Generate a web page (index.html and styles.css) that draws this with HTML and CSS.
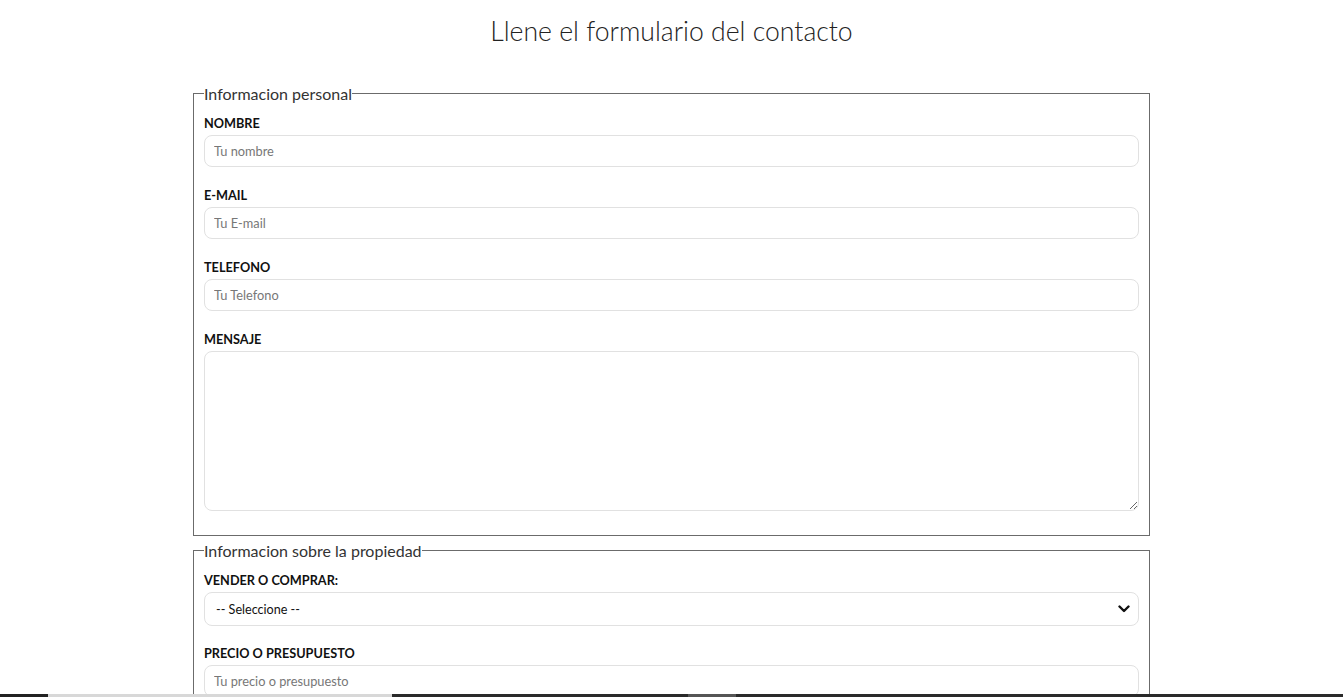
FILE: index.html
```html
<!DOCTYPE html>
<html lang="es">
<head>
<meta charset="utf-8">
<title>Contacto</title>
<link rel="stylesheet" href="styles.css">
</head>
<body>
<main class="page">
  <h1 class="title">Llene el formulario del contacto</h1>
  <form class="form">
    <fieldset class="group">
      <legend class="legend">Informacion personal</legend>
      <label class="label" for="nombre">NOMBRE</label>
      <input class="field" type="text" id="nombre" placeholder="Tu nombre">
      <label class="label" for="email">E-MAIL</label>
      <input class="field" type="email" id="email" placeholder="Tu E-mail">
      <label class="label" for="tel">TELEFONO</label>
      <input class="field" type="tel" id="tel" placeholder="Tu Telefono">
      <label class="label" for="mensaje">MENSAJE</label>
      <textarea class="field area" id="mensaje"></textarea>
    </fieldset>
    <fieldset class="group">
      <legend class="legend">Informacion sobre la propiedad</legend>
      <label class="label" for="opciones">VENDER O COMPRAR:</label>
      <div class="select-wrap">
        <select class="field select" id="opciones">
          <option value="" selected disabled>-- Seleccione --</option>
          <option>Vende</option>
          <option>Compra</option>
        </select>
        <svg class="chev" width="12" height="8" viewBox="0 0 12 8"><path d="M1.5 1.5 L6 6 L10.5 1.5" fill="none" stroke="#111" stroke-width="2.4" stroke-linecap="round" stroke-linejoin="round"/></svg>
      </div>
      <label class="label" for="precio">PRECIO O PRESUPUESTO</label>
      <input class="field" type="number" id="precio" placeholder="Tu precio o presupuesto">
    </fieldset>
  </form>
</main>
<div class="edge"></div>
</body>
</html>
```
FILE: styles.css
```css
* { box-sizing: border-box; }
html, body { margin: 0; padding: 0; background: #fff; }
body {
  font-family: Lato, "Open Sans", sans-serif;
  color: #333;
  overflow: hidden;
  height: 697px;
}
.page {
  width: 957px;
  margin: 0 auto;
}
.title {
  margin: 0;
  padding-top: 14px;
  font-size: 26.6px;
  font-weight: 300;
  line-height: 34px;
  text-align: center;
  color: #222;
}
.form {
  margin-top: 36px;
}
.group {
  margin: 0 0 5px 0;
  padding: 12px 10px 24px 10px;
  border: 1px solid #6b6b6b;
  min-width: 0;
}
.legend {
  padding: 0;
  font-size: 16px;
  line-height: 19px;
  color: #333;
}
.label {
  display: block;
  font-size: 12.7px;
  font-weight: 700;
  line-height: 17px;
  color: #111;
  margin-bottom: 3px;
}
.field {
  display: block;
  width: 100%;
  height: 32px;
  margin: 0 0 20px 0;
  padding: 0 9px;
  border: 1px solid #e1e1e1;
  border-radius: 8px;
  font-family: Lato, sans-serif;
  font-size: 12.8px;
  color: #111;
  background: #fff;
  outline: none;
}
.field::placeholder { color: #777; }
.area {
  height: 160px;
  margin-bottom: 0;
  padding: 8px 10px;
  resize: vertical;
}
.select-wrap {
  position: relative;
  margin-bottom: 19px;
}
.select {
  height: 34px;
  margin: 0;
  padding: 0 11px;
  appearance: none;
  -webkit-appearance: none;
  color: #111;
  font-size: 12.6px;
}
.chev {
  position: absolute;
  right: 9px;
  top: 13px;
  pointer-events: none;
}
input[type=number]::-webkit-inner-spin-button,
input[type=number]::-webkit-outer-spin-button { -webkit-appearance: none; margin: 0; }
.edge {
  position: fixed;
  left: 0;
  right: 0;
  bottom: 0;
  height: 3px;
  background: linear-gradient(to right,
    #222 0, #222 48px,
    #d8d8d8 48px, #d8d8d8 392px,
    #2a2a2a 392px, #2a2a2a 688px,
    #555 688px, #555 736px,
    #2a2a2a 736px, #2a2a2a 100%);
}
```
